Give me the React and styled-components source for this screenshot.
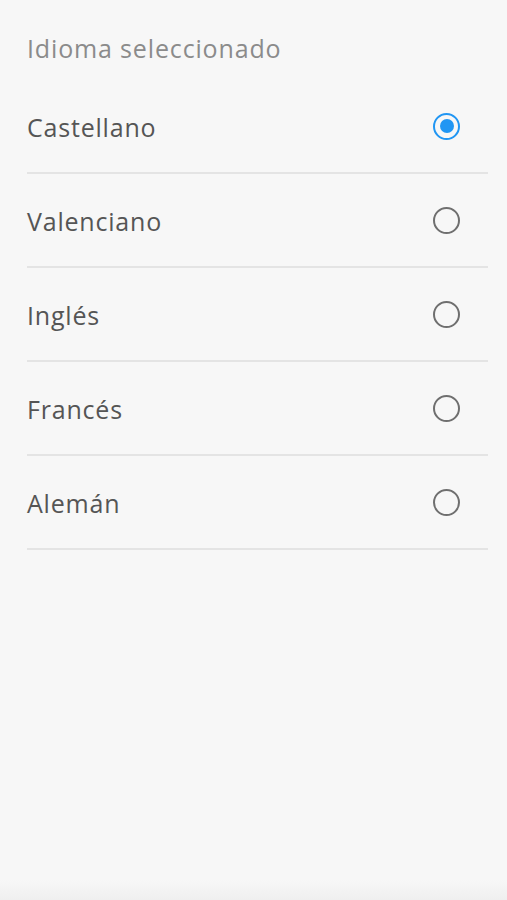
import React, { useState } from "react";
import styled, { createGlobalStyle } from "styled-components";

const GlobalStyle = createGlobalStyle`
  html, body {
    margin: 0;
    padding: 0;
    background: #f7f7f7;
  }
  #root {
    min-height: 100vh;
  }
`;

const PageContainer = styled.div`
  position: relative;
  height: 900px;
  width: 507px;
  overflow: hidden;
  background: linear-gradient(to bottom, #f7f7f7 0, #f7f7f7 880px, #efefef 900px);
  padding: 0 19px 0 27px;
  box-sizing: border-box;
  font-family: "Open Sans", Lato, sans-serif;
`;

const PageHead = styled.h2`
  margin: 0;
  height: 80px;
  display: flex;
  align-items: center;
  padding-top: 16px;
  box-sizing: border-box;
  font-size: 25px;
  font-weight: 400;
  letter-spacing: 0.85px;
  color: #8b8b8b;
`;

const LanguageList = styled.ul`
  list-style: none;
  margin: 0;
  padding: 0;
`;

const LanguageRow = styled.li`
  height: 94px;
  display: flex;
  align-items: center;
  justify-content: space-between;
  border-bottom: 2px solid #e4e4e4;
  box-sizing: border-box;
  cursor: pointer;
`;

const LanguageName = styled.span`
  font-size: 25px;
  letter-spacing: 0.8px;
  color: #555555;
  padding-top: 2px;
`;

const Radio = styled.span`
  width: 27px;
  height: 27px;
  margin-right: 28px;
  border-radius: 50%;
  box-sizing: border-box;
  border: 2.5px solid ${(props) => (props.checked ? "#2196f3" : "#6f6f6f")};
  display: grid;
  place-items: center;

  &::after {
    content: "";
    width: 14px;
    height: 14px;
    border-radius: 50%;
    background: #2196f3;
    display: ${(props) => (props.checked ? "block" : "none")};
  }
`;

const languages = ["Castellano", "Valenciano", "Inglés", "Francés", "Alemán"];

const App = () => {
  const [selected, setSelected] = useState("Castellano");

  return (
    <PageContainer>
      <GlobalStyle />
      <PageHead>Idioma seleccionado</PageHead>
      <LanguageList>
        {languages.map((lang) => (
          <LanguageRow key={lang} onClick={() => setSelected(lang)}>
            <LanguageName>{lang}</LanguageName>
            <Radio checked={selected === lang} />
          </LanguageRow>
        ))}
      </LanguageList>
    </PageContainer>
  );
};

export default App;
